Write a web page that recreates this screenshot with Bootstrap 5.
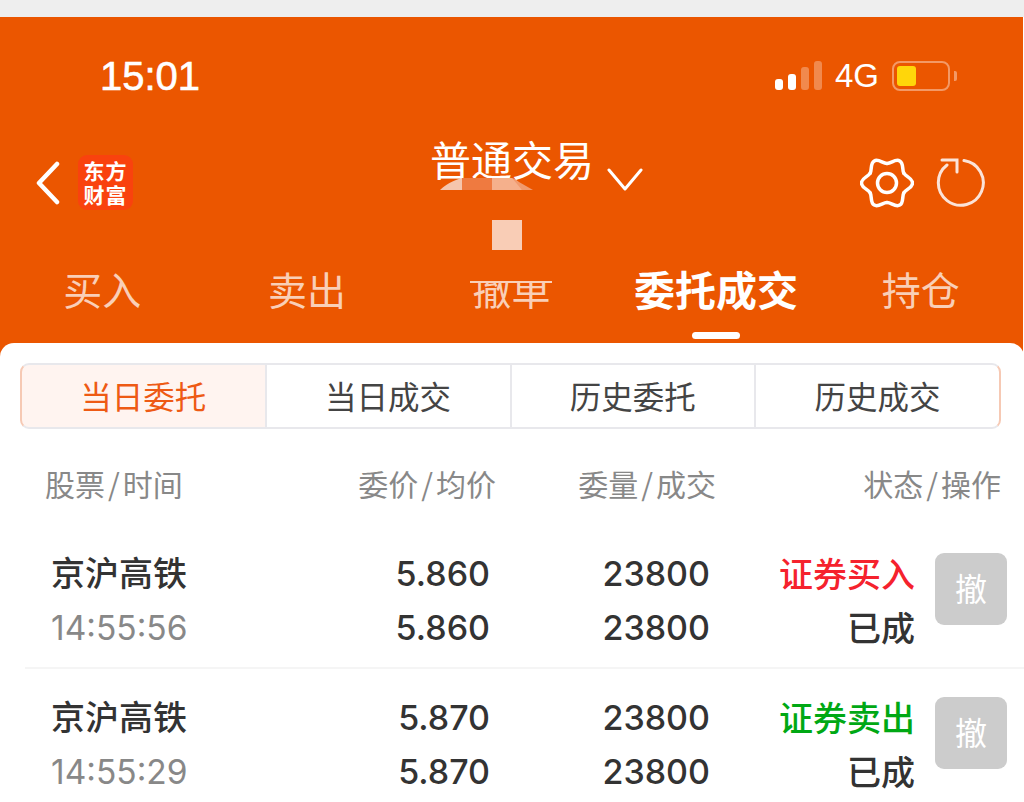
<!DOCTYPE html>
<html lang="zh-CN">
<head>
    <meta charset="UTF-8">
    <meta name="viewport" content="width=device-width, initial-scale=1.0">
    <title>委托成交</title>
    <link href="https://cdn.jsdelivr.net/npm/bootstrap@5.3.0/dist/css/bootstrap.min.css" rel="stylesheet">
    <style>
        html, body {
            height: 802px;
            overflow: hidden;
        }
        body {
            font-family: "Noto Sans CJK SC", sans-serif;
            background: #fff;
            color: #333;
        }
        .top-strip { height: 17px; background: #eeeeee; }
        .app-head {
            position: relative;
            height: 340px;
            margin-right: 1px;
            background: #eb5600;
            color: #fff;
        }
        .status-row { height: 118px; padding: 0 66px 0 100px; }
        .clock { font: 400 40px "Liberation Sans", sans-serif; -webkit-text-stroke: .6px #fff; }
        .signal-icon { margin-right: -3px; }
        .net-label { font: 400 33px "Liberation Sans", sans-serif; margin: 0 13px 0 15px; }
        .battery-box {
            width: 58px;
            height: 30px;
            padding: 3px;
            border: 2px solid rgba(255,255,255,.4);
            border-radius: 8px;
        }
        .battery-fill { width: 19px; height: 100%; background: #ffd60a; border-radius: 3px; }
        .battery-nub { width: 3px; height: 10px; margin-left: 4px; background: rgba(255,255,255,.4); border-radius: 0 2px 2px 0; }
        .nav-row { height: 96px; padding: 0 37px 0 36px; }
        .tool-icons { gap: 22px; }
        .brand-logo {
            width: 55px;
            height: 55px;
            margin: -1px 0 0 18px;
            padding-top: 3px;
            background: #f9420e;
            border-radius: 9px;
            font-size: 21px;
            font-weight: 700;
            letter-spacing: 1px;
            text-align: center;
        }
        .brand-logo > div { height: 24px; line-height: 24px; }
        .page-title {
            position: absolute;
            left: 430px;
            top: 111px;
            font-size: 41px;
            font-weight: 400;
            line-height: 60px;
        }
        .title-caret { position: absolute; left: 607px; top: 150px; }
        .head-tabs .nav-link {
            height: 112px;
            padding: 27px 0 0;
            color: rgba(255,255,255,.72);
            font-size: 39px;
            font-weight: 400;
            line-height: 60px;
        }
        .head-tabs .nav-link.active {
            position: relative;
            color: #fff;
            font-size: 41px;
            font-weight: 700;
        }
        .head-tabs .nav-link.active::after {
            content: "";
            position: absolute;
            left: 50%;
            bottom: 4px;
            width: 48px;
            height: 7px;
            margin-left: -24px;
            background: #fff;
            border-radius: 4px;
        }
        .mask-dome { position: absolute; left: 440px; top: 160px; }
        .mask-square { position: absolute; left: 492px; top: 203px; width: 30px; height: 30px; background: #f9cdb6; }
        .mask-cut {
            position: absolute;
            left: 470px;
            top: 251px;
            width: 82px;
            height: 15px;
            background: #eb5600;
            border-bottom: 2px solid rgba(255,255,255,.72);
        }
        .sheet {
            position: relative;
            margin-top: -14px;
            padding-top: 20px;
            background: #fff;
            border-radius: 14px 14px 0 0;
        }
        .range-tabs { display: flex; width: 981px; height: 66px; margin-left: 20px; }
        .range-tabs .btn {
            flex: 1;
            padding: 0 0 2px;
            color: #444;
            background: #fff;
            border: 2px solid #e8e8ec;
            border-radius: 0;
            margin-left: -2px;
            font-size: 31.5px;
            line-height: 58px;
        }
        .range-tabs .btn:first-child {
            margin-left: 0;
            color: #ee5a14;
            background: #fff4f0;
            border-radius: 9px 0 0 9px;
            border-left-color: #f6c9b4;
        }
        .range-tabs .btn:last-child { border-radius: 0 9px 9px 0; border-right-color: #f6c9b4; }
        .col-heads {
            height: 96px;
            padding: 12px 23px 0 45px;
            color: #888;
            font-size: 30px;
        }
        .col-heads > div:nth-child(1) { width: 240px; }
        .col-heads > div:nth-child(2) { width: 211px; text-align: right; }
        .col-heads > div:nth-child(3) { width: 220px; text-align: right; }
        .col-heads > div:nth-child(4) { width: 285px; text-align: right; }
        .slash-mark { margin: 0 3px; }
        .order-row {
            height: 144px;
            margin-left: 25px;
            padding: 10px 0 0 26px;
            border-bottom: 2px solid #f5f5f5;
        }
        .order-cell > div { height: 54px; line-height: 54px; white-space: nowrap; }
        .cell-name { width: 252px; font-size: 34px; font-weight: 500; }
        .cell-name > div:first-child { line-height: 50px; }
        .cell-price { width: 187px; text-align: right; }
        .cell-qty { width: 220px; text-align: right; }
        .cell-state { width: 205px; text-align: right; font-size: 34px; font-weight: 500; }
        .order-cell.cell-state > div { line-height: 51px; }
        .num-text { font-family: Inter, sans-serif; font-size: 34px; font-weight: 500; color: #333; }
        .time-text { font-family: Inter, sans-serif; font-size: 33.5px; font-weight: 400; color: #888; }
        .buy-text { color: #f5222d; }
        .sell-text { color: #00a814; }
        .cancel-btn {
            align-self: flex-start;
            width: 72px;
            height: 72px;
            margin: 18px 0 0 20px;
            padding: 0 0 4px;
            color: #fff;
            background: #cccccc;
            border: 0;
            border-radius: 9px;
            font-size: 32px;
        }
    </style>
</head>
<body>
    <div class="top-strip"></div>

    <header class="app-head">
        <div class="status-row d-flex align-items-center">
            <div class="clock">15:01</div>
            <div class="ms-auto d-flex align-items-center">
                <svg class="signal-icon" width="48" height="30" viewBox="0 0 48 30" fill="#fff">
                    <rect x="0" y="18" width="8" height="11" rx="3"/>
                    <rect x="13" y="13" width="8" height="16" rx="3"/>
                    <rect x="26" y="6" width="8" height="23" rx="3" opacity=".3"/>
                    <rect x="39" y="0" width="8" height="29" rx="3" opacity=".3"/>
                </svg>
                <span class="net-label">4G</span>
                <div class="battery-box"><div class="battery-fill"></div></div>
                <div class="battery-nub"></div>
            </div>
        </div>

        <div class="nav-row d-flex align-items-center">
            <svg width="24" height="44" viewBox="0 0 24 44" fill="none" stroke="#fff" stroke-width="4.5" stroke-linecap="round" stroke-linejoin="round">
                <path d="M21 3 3 22l18 19"/>
            </svg>
            <div class="brand-logo"><div>东方</div><div>财富</div></div>
            <div class="tool-icons ms-auto d-flex align-items-center">
                <svg width="54" height="54" viewBox="-27 -27 54 54" fill="none" stroke="#fff" stroke-width="3.5" stroke-linecap="round">
                    <path d="M16.9-9.75C19-6 25.5-5 25.5 0S19 6 16.9 9.75"/>
                    <path d="M16.9-9.75C19-6 25.5-5 25.5 0S19 6 16.9 9.75" transform="rotate(60)"/>
                    <path d="M16.9-9.75C19-6 25.5-5 25.5 0S19 6 16.9 9.75" transform="rotate(120)"/>
                    <path d="M16.9-9.75C19-6 25.5-5 25.5 0S19 6 16.9 9.75" transform="rotate(180)"/>
                    <path d="M16.9-9.75C19-6 25.5-5 25.5 0S19 6 16.9 9.75" transform="rotate(240)"/>
                    <path d="M16.9-9.75C19-6 25.5-5 25.5 0S19 6 16.9 9.75" transform="rotate(300)"/>
                    <circle r="9.5"/>
                </svg>
                <svg width="50" height="50" viewBox="0 0 50 50" fill="none" stroke="#fbe3d8" stroke-width="3" stroke-linecap="round">
                    <path d="M28 2.5A22.5 22.5 0 1 1 11 7"/>
                    <path d="M6 2H21V14"/>
                </svg>
            </div>
        </div>

        <div class="page-title">普通交易</div>
        <svg class="title-caret" width="36" height="24" viewBox="0 0 36 24" fill="none" stroke="#fff" stroke-width="3" stroke-linecap="round" stroke-linejoin="round">
            <path d="M2 3 18 22 34 3"/>
        </svg>

        <nav class="nav nav-justified head-tabs">
            <a class="nav-link" href="#">买入</a>
            <a class="nav-link" href="#">卖出</a>
            <a class="nav-link" href="#">撤单</a>
            <a class="nav-link active" href="#">委托成交</a>
            <a class="nav-link" href="#">持仓</a>
        </nav>

        <svg class="mask-dome" width="94" height="14" viewBox="0 0 94 14">
            <path d="M0 13C8 5 18 2 22 1V13Z" fill="#f5c5ad"/>
            <path d="M22 1H52V13H22Z" fill="#ef7a40"/>
            <path d="M52 1H72C78 3 82 8 82 13H52Z" fill="#f5b08c"/>
            <path d="M72 1 93 13H82Z" fill="#f09a6e"/>
        </svg>
        <div class="mask-square"></div>
        <div class="mask-cut"></div>
    </header>

    <main class="sheet">
        <div class="range-tabs">
            <button class="btn" type="button">当日委托</button>
            <button class="btn" type="button">当日成交</button>
            <button class="btn" type="button">历史委托</button>
            <button class="btn" type="button">历史成交</button>
        </div>

        <div class="col-heads d-flex align-items-center">
            <div>股票<span class="slash-mark">/</span>时间</div>
            <div>委价<span class="slash-mark">/</span>均价</div>
            <div>委量<span class="slash-mark">/</span>成交</div>
            <div>状态<span class="slash-mark">/</span>操作</div>
        </div>

        <div class="order-row d-flex align-items-center">
            <div class="order-cell cell-name"><div>京沪高铁</div><div class="time-text">14:55:56</div></div>
            <div class="order-cell cell-price num-text"><div>5.860</div><div>5.860</div></div>
            <div class="order-cell cell-qty num-text"><div>23800</div><div>23800</div></div>
            <div class="order-cell cell-state"><div class="buy-text">证券买入</div><div>已成</div></div>
            <button class="cancel-btn" type="button">撤</button>
        </div>
        <div class="order-row d-flex align-items-center">
            <div class="order-cell cell-name"><div>京沪高铁</div><div class="time-text">14:55:29</div></div>
            <div class="order-cell cell-price num-text"><div>5.870</div><div>5.870</div></div>
            <div class="order-cell cell-qty num-text"><div>23800</div><div>23800</div></div>
            <div class="order-cell cell-state"><div class="sell-text">证券卖出</div><div>已成</div></div>
            <button class="cancel-btn" type="button">撤</button>
        </div>
    </main>

    <script src="https://cdn.jsdelivr.net/npm/bootstrap@5.3.0/dist/js/bootstrap.bundle.min.js"></script>
</body>
</html>
